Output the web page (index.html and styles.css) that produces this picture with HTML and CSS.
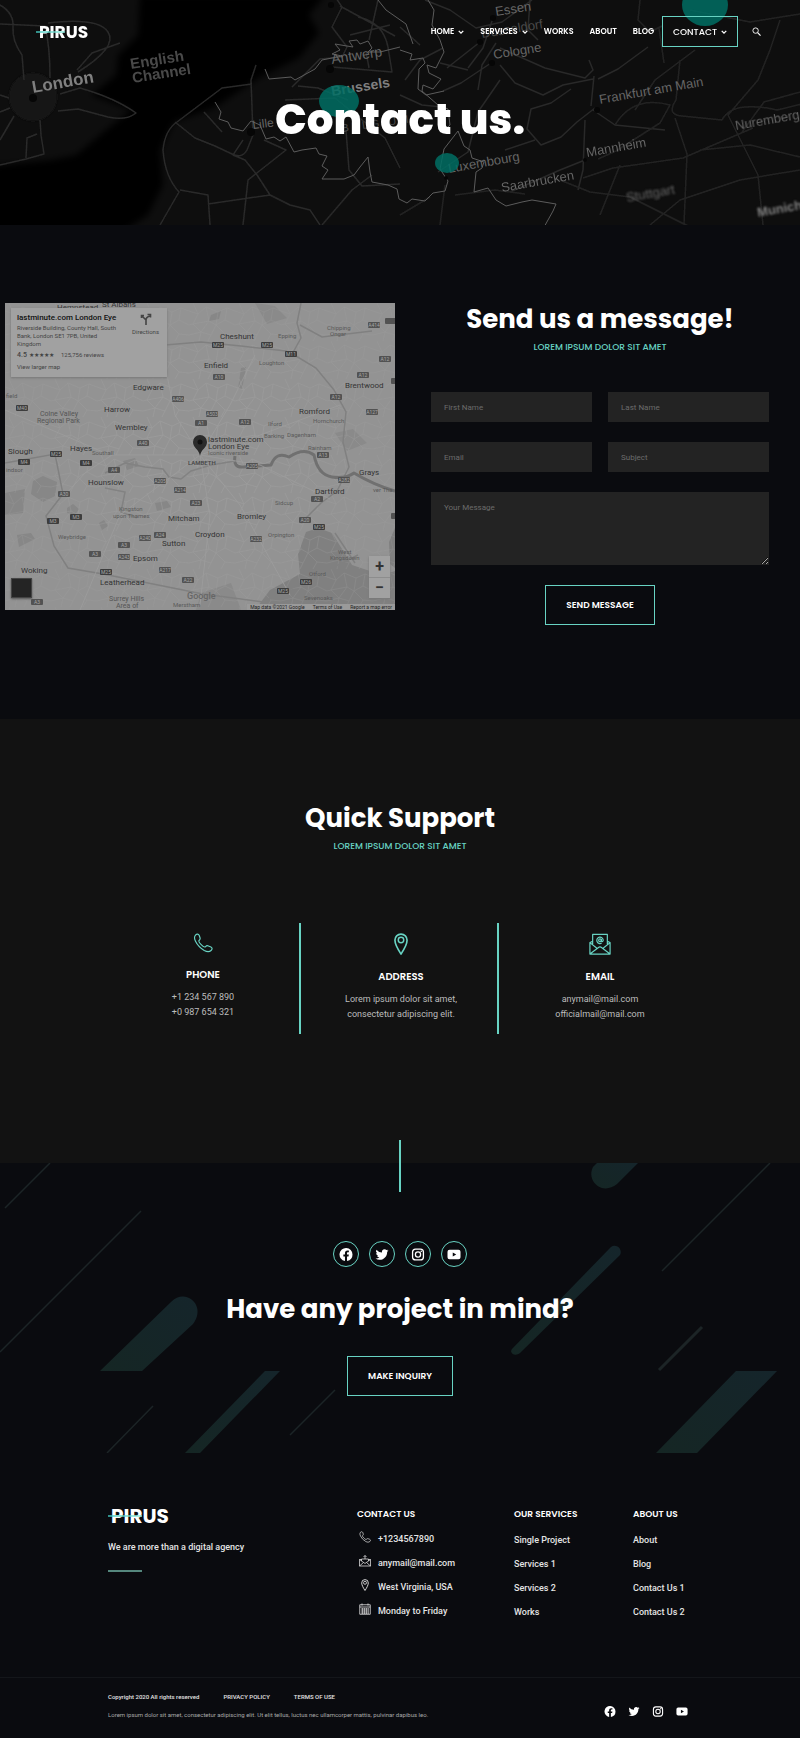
FILE: index.html
```html
<!DOCTYPE html>
<html lang="en">
<head>
<meta charset="utf-8">
<meta name="viewport" content="width=device-width, initial-scale=1">
<title>Pirus - Contact us</title>
<link rel="stylesheet" href="styles.css">
</head>
<body>
<svg class="defs" aria-hidden="true">
  <symbol id="i-chev" viewBox="1 0 8 10"><path d="M2 3.500l3 3 3-3" fill="none" stroke="currentColor" stroke-width="1.800"/></symbol>
  <symbol id="i-fb" viewBox="0 0 24 24"><path fill="currentColor" d="M24 12a12 12 0 1 0-13.9 11.9v-8.4H7.100V12h3V9.400c0-3 1.800-4.700 4.500-4.700 1.300 0 2.700.2 2.700.2v3h-1.500c-1.500 0-2 .9-2 1.900V12h3.400l-.5 3.500h-2.800v8.400A12 12 0 0 0 24 12z"/></symbol>
  <symbol id="i-tw" viewBox="0 0 24 24"><path fill="currentColor" d="M24 4.600a10 10 0 0 1-2.800.8 5 5 0 0 0 2.200-2.700c-1 .6-2 1-3.100 1.200a4.900 4.900 0 0 0-8.400 4.500A14 14 0 0 1 1.700 3.200a4.900 4.900 0 0 0 1.500 6.500 5 5 0 0 1-2.200-.6v.1a4.900 4.900 0 0 0 4 4.800 5 5 0 0 1-2.300.1 4.900 4.900 0 0 0 4.600 3.400A9.900 9.900 0 0 1 0 19.500 14 14 0 0 0 7.500 21.700c9.100 0 14-7.500 14-14v-.6A10 10 0 0 0 24 4.600z"/></symbol>
  <symbol id="i-ig" viewBox="0 0 24 24"><rect x="2" y="2" width="20" height="20" rx="5.500" fill="none" stroke="currentColor" stroke-width="2.400"/><circle cx="12" cy="12" r="4.800" fill="none" stroke="currentColor" stroke-width="2.400"/><circle cx="18" cy="6" r="1.500" fill="currentColor"/></symbol>
  <symbol id="i-yt" viewBox="0 0 28 24"><path fill="currentColor" fill-rule="evenodd" d="M5 2.500h18a4 4 0 0 1 4 4v11a4 4 0 0 1-4 4H5a4 4 0 0 1-4-4v-11a4 4 0 0 1 4-4zM11.500 8v8l7-4z"/></symbol>
  <symbol id="i-phone" viewBox="0 0 24 24"><path fill="none" stroke="currentColor" stroke-width="1.400" stroke-linejoin="round" d="M3 2.500C4.500 1 6.500 1 7.500 3l1 3c.3 1.300 0 2-1.200 3-1 1 0 2.500 2.500 5s4 3.500 5.200 2.500c1-1.200 2-1.600 3.500-1l3 1.200c2 1 1.700 3 .2 4.300-2 1.800-5 1.700-8.200 0A26 26 0 0 1 3 10C1.500 7 1.300 4.500 3 2.500z"/></symbol>
  <symbol id="i-pin" viewBox="0 0 24 24"><path fill="none" stroke="currentColor" stroke-width="1.800" stroke-linejoin="round" d="M12 1.200a6.600 6.600 0 0 0-6.600 6.800C5.400 12 9 18.500 12 23c3-4.500 6.600-11 6.600-15A6.600 6.600 0 0 0 12 1.200z"/><circle cx="12" cy="7.600" r="3" fill="none" stroke="currentColor" stroke-width="1.600"/></symbol>
  <symbol id="i-mail" viewBox="0 0 24 24"><g fill="none" stroke="currentColor" stroke-width="1.300" stroke-linejoin="round"><path d="M4 9L1 10.500V23h22V10.500L20 9M1 10.500l8 6.500M23 10.500L15 17M1 23l9-7q2-1.500 4 0l9 7M4 13V1.500h16V13"/><circle cx="12" cy="8" r="1.500"/><path d="M13.500 6.500V9q1.500 1 2-1a3.500 3.500 0 1 0-1.700 3"/></g></symbol>
  <symbol id="i-mail2" viewBox="0 0 24 24"><g fill="none" stroke="currentColor" stroke-width="1.500" stroke-linejoin="round"><path d="M1 9v13h22V9h-4M5 9H1l11 8 11-8M1 22l8-7M23 22l-8-7M5 12V8h14v4M12 8V1M9 4l3-3 3 3"/></g></symbol>
  <symbol id="i-cal" viewBox="0 0 24 24"><path fill="none" stroke="currentColor" stroke-width="1.600" d="M1.500 3.500h21v19h-21zM1.500 8h21M6 1v4M18 1v4"/><path fill="none" stroke="currentColor" stroke-width="2.600" stroke-dasharray="3 1" d="M5 12h14.500M5 16h14.500M5 20h14.500"/></symbol>
  <defs>
    <rect id="m" width="12" height="6" rx="1" fill="#3d3d3d"/>
    <rect id="a" width="12" height="6" rx="1" fill="#525252"/>
  </defs>
</svg>

<header class="hero">
  <svg class="hero-map" viewBox="0 0 800 225" preserveAspectRatio="xMidYMid slice" aria-hidden="true">
    <defs>
      <filter id="soft"><feGaussianBlur stdDeviation="0.700"/></filter>
      <filter id="softer"><feGaussianBlur stdDeviation="1.200"/></filter>
      <filter id="coast"><feGaussianBlur stdDeviation="3"/></filter>
    </defs>
    <rect width="800" height="225" fill="#0e0e0e"/>
    <path filter="url(#coast)" fill="#060606" d="M140-5l-2 40-20 20-2 20-25 20 40 15-25 20-30 25-25 5L-10 166v74h120l38-25 15-30-3-35 14-28 40-14 45-30 40-20 20-25-10-18 16-20z"/>
    <circle cx="33" cy="97" r="24" fill="#171717" filter="url(#softer)"/>
    <g fill="none" stroke="#292929" stroke-width="1.500" stroke-linejoin="round">
      <g filter="url(#soft)">
        <path d="M0 5q14 8 13 22t9 28l2 25M0 24l45 2q5 20 5 52M48 23q50-6 60 9t-30 40M77 70l15-17 28-10M60 94l20-6q35 10 56 25-10 8-28 4l-30-8-20 2M40 120l1 15 3 19-18 5-26 6M26 158l1-20 10-4M14 116L0 140M9 98L0 95M10 108l-10 4"/>
        <path d="M160 225l19-33q-14-15-16-42 2-20 14-28l45-34 30-4M180 190l28 5 2 30M208 204l62-9-13-20-12-15-12-5 10-15M243 225l5-45 38-30-22-10M175 122l20 16 20 8 17 8M232 154q10 5 15-4l6-15-2-55 5-15M270 195l20 10 20 5 10 15M322 225l30-35 20-15M346 130l3 40 13 16 38-2M204 112l18 20M298 86l20 2 30 12M292 87l28-28 22-2 5-10-15-20 10-20-10-15M332 67l60 5-4-25M388 47q-5-25-30-30M366 52l3 16M285 100l50-2 22 18 28 22 15 30M350 35l40-10M400 27l20 18M378 0l-9 40M340 6l55 30"/>
      </g>
      <path d="M425 0l25 10 26 18 26-6 30-22M493 18l-10 30-15 20M480 42l-33 26M491 63l-30 20-18 8M478 90l4-25 14-22M500 48l45 20 40 10 8-8-4-10M500 65l15 18 28 12 20-10 30-6M500 80l-22 32-10 40-30 20M443 48l-23 12-15 20M400 95l22 10 20 2M468 70l-28-7M530 0l-2 30 10 10M598 79l20-10 30-22M594 76l-3 30M595 108l-18 14-16 15-20 8-14-16 4-20 20-6 20-14M593 110l22 15 50 5M585 120l-2 50-5 20M585 160l-25 10-50 22M505 150l30-10"/>
      <path filter="url(#soft)" stroke="#222" d="M615 125q18-30 55-20l-10 18-44 28-18 8M635 110l20-30 40-30M640 0l-2 20 12 12 12-6M659 28l5 35M690 10l60 12 50-8M680 60l-4 40q-10 15 6 16l40 4q10-20 55-10l25-6M675 118l12 36-3 70M583 178l30-10 70-10 70-30M780 20l-10 30-12 30-30 35 30 60 5 50M560 180l30 12 40 5 60 30M600 215l20-50M650 225l30-25 60-20 60-10M455 195l40-5 30 4M440 225l5-40M400 215l30-18M742 132l22-30 36-10M700 150l50-5 50 12"/>
    </g>
    <path fill="none" stroke="#5c5c5c" d="M265 69l4 10 22-2 4 3 20-11 7-9 20-4-10-2 8-4-5-6 18 3-4-6 8-1 3 4 8-3 4 7-4 4h12l20-5M215 102l6 10-2 7 9 3 3 6 12 3 8-10 9 4 6 14 8-2 6 4 6-4 8 15 8-2 14-2 3 6 8 2-5 10 6 4-6 9h22l10-4 6-8 8-10 2 15 2 10 16 3 9 4 2 10 8 4 5-4 13 2 8-8 12-2 3-10-8-12 4-20 14-18 6 15 6 4 2 8 12 4-2 6-6 4-2 20 14-4 8 12 10 6 16-4 10-2 24 4-3 7-10 18M428 0l6 10-2 15 8 15 4 12-8 16-9-3 2 8 12 6-8 10-10-4-1 6 16 14 10 4 2 16-8 8M400 50l12 4-2 6 13-2 2 5-6 6-1 20 8 6 18-4M378 0l8 10 20 14 7 20"/>
    <g fill="#060606"><circle cx="330" cy="69" r="4"/><circle cx="493" cy="18" r="3"/><circle cx="480" cy="42" r="3"/><circle cx="492" cy="63" r="3"/><circle cx="597" cy="110" r="3"/><circle cx="585" cy="160" r="2"/><circle cx="251" cy="132" r="4"/><circle cx="33" cy="98" r="4"/><circle cx="446" cy="178" r="2"/><circle cx="331" cy="5" r="3"/></g>
    <g class="hero-places">
      <g filter="url(#soft)"><text class="b" font-size="17" transform="translate(33 93) rotate(-10)">London</text>
      <text class="b dim" font-size="15" transform="translate(131 69) rotate(-9)">English</text><text class="b dim" font-size="15" transform="translate(133 83) rotate(-9)">Channel</text></g>
      <text font-size="14" transform="translate(332 64) rotate(-9)">Antwerp</text>
      <text class="b" font-size="14" transform="translate(332 96) rotate(-9)">Brussels</text>
      <text font-size="12" transform="translate(253 129) rotate(-7)">Lille</text>
      <text class="dim" font-size="11" transform="translate(342 132) rotate(-8)">B E L G I U M</text>
      <text font-size="13" transform="translate(496 16) rotate(-9)">Essen</text>
      <text class="dim" font-size="13" transform="translate(482 38) rotate(-9)">Dusseldorf</text>
      <text font-size="13" transform="translate(494 59) rotate(-9)">Cologne</text>
      <text font-size="13" transform="translate(600 104) rotate(-10)">Frankfurt am Main</text>
      <text font-size="13" transform="translate(449 173) rotate(-10)">Luxembourg</text>
      <g filter="url(#soft)"><text font-size="13" transform="translate(587 157) rotate(-10)">Mannheim</text>
      <text font-size="13" transform="translate(502 192) rotate(-10)">Saarbrucken</text>
      <text font-size="13" transform="translate(736 130) rotate(-10)">Nuremberg</text></g>
      <g filter="url(#softer)"><text font-size="13" transform="translate(627 202) rotate(-10)">Stuttgart</text>
      <text class="b" font-size="13" transform="translate(758 217) rotate(-10)">Munich</text></g>
    </g>
    <g fill="#006e63" opacity="0.850"><ellipse cx="339" cy="101" rx="20" ry="16"/><ellipse cx="705" cy="5" rx="23" ry="21"/><ellipse cx="447" cy="163" rx="12" ry="10"/></g>
  </svg>
  <div class="topbar">
    <a class="logo" href="#">PIRUS</a>
    <nav class="nav">
      <a href="#">HOME<svg><use href="#i-chev"/></svg></a>
      <a href="#">SERVICES<svg><use href="#i-chev"/></svg></a>
      <a href="#">WORKS</a>
      <a href="#">ABOUT</a>
      <a href="#">BLOG</a>
      <a class="nav-box" href="#">CONTACT<svg><use href="#i-chev"/></svg></a>
      <button class="search" type="button" aria-label="Search"><svg viewBox="0 0 10 10"><circle cx="4" cy="4" r="3" fill="none" stroke="#fff"/><path d="M6.200 6.200L9.500 9.500" stroke="#fff" stroke-width="1.300"/></svg></button>
    </nav>
  </div>
  <h1>Contact us.</h1>
</header>

<main>
<section class="contact">
  <div class="map">
    <svg class="map-art" viewBox="0 0 390 307" preserveAspectRatio="xMidYMid slice" role="img" aria-label="Map of London">
      <defs>
        <pattern id="streets" width="46" height="38" patternUnits="userSpaceOnUse">
          <path fill="none" stroke="#9f9f9f" stroke-width="0.800" d="M0 8l9 3 8-7 12 5 9-4 8 3M4 0l5 11-5 10 8 8-2 9M17 4l3 14-8 11M29 9l-2 13 9 9-4 7M38 5l-2 12 10 5M0 22l4-1 16-3 7 4 9-5M0 32l12-3 10 3 5-10M22 32l-3 6M36 31l10 1"/>
        </pattern>
        <radialGradient id="fade"><stop offset="0.300" stop-color="#fff"/><stop offset="1" stop-color="#777"/></radialGradient>
        <mask id="city"><rect width="390" height="307" fill="url(#fade)"/></mask>
      </defs>
      <rect width="390" height="307" fill="#939393"/>
      <g fill="#878787"><path d="M28 178l10-5 14 6-2 14-12 6-12-8zM62 205l6-4 6 5-4 6-8-2zM94 220l5-3 4 6-6 4zM12 232l14-2 4 6-16 8zM206 12l10-4-2 8-10 2zM236 65l5-1-4 22-4 0zM0 190l20-4-2 24-18 2zM150 200l12-2 4 6-14 4zM118 158l12-3 4 8-12 4z"/></g>
      <path fill="#808080" d="M313 225l14 5 20 32 30 10 13-4v39H250l15-20 30-16-2-20 8-22zM390 225l-6 14 1 22 5 4z"/>
      <path fill="#8a8a8a" d="M196 290l30-10 10 27h-45zM250 0l20 3 12 12-20 6zM330 130l18-4 14 14-20 8z"/>
      <rect width="390" height="307" fill="url(#streets)" mask="url(#city)" opacity="0.700"/>
      <g fill="none" stroke="#808080" stroke-width="1.500">
        <path d="M296 0l-4 20 4 15-10 18M160 42l36-3 40 4 45 5 10 5 20 12 18 22 12 22-3 30 6 25-12 24-16 12-20 20M0 160l50-9 8 40-17 22 8 30 14 22 35 6 40 8 60 12 60 8 25-12 70-35M295 22l22 12 50-6M330 230l20 30"/>
      </g>
      <path fill="none" stroke="#707070" stroke-width="3" stroke-linejoin="round" d="M230 153q-2 12 8 11l28-2q5-14 18-8 15-10 25-2 4 20 18 22 14 2 22-4 20 12 41 18"/>
      <path fill="none" stroke="#828282" stroke-width="1.500" d="M100 170l20-10 20 4 18 2 6 8 12 2 10-8 20-6 24-4M100 185l20 4-4 20 16 6"/>
      <g fill="none" stroke="#9d9d9d" stroke-width="0.800"><path d="M195 152l-25-40-12-60M195 152l30-50 25-50M195 152l60 10 70 34M195 152l10 60-10 90M195 152l-80 60-40 95M195 152l-90 0-105-45M195 152l60-20 80-30M195 152l40 50 50 90M110 150l-30 20-20 22"/></g>
      <g class="shield">
        <use href="#m" x="207" y="39"/><use href="#m" x="256" y="39"/><use href="#m" x="280" y="48"/><use href="#a" x="363" y="19"/><use href="#a" x="380" y="15"/><use href="#a" x="208" y="71"/><use href="#a" x="374" y="53"/><use href="#a" x="352" y="69"/><use href="#a" x="325" y="91"/><use href="#a" x="361" y="106"/><use href="#a" x="167" y="93"/><use href="#a" x="201" y="108"/><use href="#a" x="190" y="117"/><use href="#a" x="234" y="116"/><use href="#m" x="11" y="102"/><use href="#a" x="132" y="137"/><use href="#m" x="45" y="148"/><use href="#a" x="312" y="149"/><use href="#m" x="13" y="156"/><use href="#m" x="75" y="157"/><use href="#a" x="103" y="164"/><use href="#a" x="149" y="175"/><use href="#a" x="169" y="184"/><use href="#a" x="53" y="188"/><use href="#a" x="185" y="197"/><use href="#m" x="65" y="211"/><use href="#m" x="42" y="215"/><use href="#a" x="241" y="160"/><use href="#a" x="333" y="174"/><use href="#a" x="306" y="193"/><use href="#a" x="294" y="214"/><use href="#m" x="308" y="221"/><use href="#a" x="245" y="233"/><use href="#a" x="149" y="229"/><use href="#a" x="134" y="232"/><use href="#a" x="113" y="239"/><use href="#a" x="84" y="248"/><use href="#a" x="113" y="251"/><use href="#m" x="95" y="266"/><use href="#a" x="154" y="264"/><use href="#a" x="177" y="274"/><use href="#m" x="272" y="285"/><use href="#m" x="295" y="276"/><use href="#a" x="26" y="296"/><use href="#a" x="386" y="75"/><use href="#a" x="386" y="210"/>
        <text x="213" y="44">M25</text><text x="262" y="44">M25</text><text x="286" y="53">M11</text><text x="369" y="24">A414</text><text x="214" y="76">A10</text><text x="380" y="58">A12</text><text x="358" y="74">A12</text><text x="331" y="96">A12</text><text x="367" y="111">A127</text><text x="173" y="98">A406</text><text x="207" y="113">A503</text><text x="196" y="122">A1</text><text x="240" y="121">A12</text><text x="17" y="107">M40</text><text x="138" y="142">A40</text><text x="51" y="153">M25</text><text x="318" y="154">A13</text><text x="19" y="161">M4</text><text x="81" y="162">M4</text><text x="109" y="169">A4</text><text x="155" y="180">A205</text><text x="175" y="189">A214</text><text x="59" y="193">A30</text><text x="191" y="202">A23</text><text x="71" y="216">M3</text><text x="48" y="220">M3</text><text x="247" y="165">A205</text><text x="339" y="179">A282</text><text x="312" y="198">A2</text><text x="300" y="219">A20</text><text x="314" y="226">M25</text><text x="251" y="238">A232</text><text x="155" y="234">A24</text><text x="140" y="237">A240</text><text x="119" y="244">A3</text><text x="90" y="253">A3</text><text x="119" y="256">A243</text><text x="101" y="271">M25</text><text x="160" y="269">A217</text><text x="183" y="279">A22</text><text x="278" y="290">M25</text><text x="301" y="281">M26</text><text x="32" y="301">A3</text>
      </g>
      <g class="town">
        <text x="215" y="36">Cheshunt</text><text x="199" y="65">Enfield</text><text x="340" y="85">Brentwood</text><text x="128" y="87">Edgware</text><text x="99" y="109">Harrow</text><text x="110" y="127">Wembley</text><text x="294" y="111">Romford</text><text x="3" y="151">Slough</text><text x="65" y="148">Hayes</text><text x="83" y="182">Hounslow</text><text x="354" y="172">Grays</text><text x="310" y="191">Dartford</text><text x="163" y="218">Mitcham</text><text x="232" y="216">Bromley</text><text x="190" y="234">Croydon</text><text x="157" y="243">Sutton</text><text x="128" y="258">Epsom</text><text x="16" y="270">Woking</text><text x="95" y="282">Leatherhead</text><text x="203" y="139">lastminute.com</text><text x="203" y="146">London Eye</text><text x="97" y="4">St Albans</text><text x="52" y="7">Hempstead</text>
      </g>
      <g class="town area">
        <text x="35" y="113">Colne Valley</text><text x="32" y="120">Regional Park</text><text x="104" y="298">Surrey Hills</text><text x="111" y="305">Area of</text>
      </g>
      <g class="town minor">
        <text x="273" y="35">Epping</text><text x="322" y="27">Chipping</text><text x="325" y="33">Ongar</text><text x="254" y="62">Loughton</text><text x="1" y="95">field</text><text x="308" y="120">Hornchurch</text><text x="263" y="123">Ilford</text><text x="259" y="135">Barking</text><text x="282" y="134">Dagenham</text><text x="87" y="152">Southall</text><text x="303" y="147">Rainham</text><text x="1" y="169">indsor</text><text x="270" y="202">Sidcup</text><text x="114" y="208">Kingston</text><text x="108" y="215">upon Thames</text><text x="53" y="236">Weybridge</text><text x="263" y="234">Orpington</text><text x="333" y="251">West</text><text x="325" y="257">Kingsdown</text><text x="304" y="273">Otford</text><text x="168" y="304">Merstham</text><text x="299" y="297">Sevenoaks</text><text x="368" y="189">ver Tha</text><text x="203" y="152">Iconic riverside</text><text x="183" y="162" class="strong">LAMBETH</text>
      </g>
      <text x="182" y="296" class="google">Google</text>
      <path fill="#2b2b2b" d="M195 153c-1-7-7-8-7-14a7 7 0 0 1 14 0c0 6-6 7-7 14z"/><circle cx="195" cy="139" r="2.500" fill="#111"/>
    </svg>
    <div class="place">
      <div class="place-text">
        <strong>lastminute.com London Eye</strong>
        <p>Riverside Building, County Hall, South Bank, London SE1 7PB, United Kingdom</p>
        <p class="rating"><b>4.5</b> <span class="stars">★★★★★</span> <span>125,756 reviews</span></p>
        <a href="#">View larger map</a>
      </div>
      <a class="directions" href="#"><svg viewBox="0 0 12 12"><path fill="none" stroke="#444" stroke-width="1.600" d="M6 12V7L2 3M6 7q0-3 4-4M7.500 1.500h3v3M1.500 5V2.500H4"/></svg>Directions</a>
    </div>
    <div class="zoom"><button type="button" aria-label="Zoom in">+</button><button type="button" aria-label="Zoom out">−</button></div>
    <button class="satellite" type="button" aria-label="Satellite view"></button>
    <div class="credits"><span>Map data ©2021 Google</span><a href="#">Terms of Use</a><a href="#">Report a map error</a></div>
  </div>
  <div class="message">
    <h2>Send us a message!</h2>
    <p class="sub">LOREM IPSUM DOLOR SIT AMET</p>
    <form class="form">
      <input type="text" aria-label="First Name" placeholder="First Name">
      <input type="text" aria-label="Last Name" placeholder="Last Name">
      <input type="email" aria-label="Email" placeholder="Email">
      <input type="text" aria-label="Subject" placeholder="Subject">
      <textarea aria-label="Your Message" placeholder="Your Message"></textarea>
      <button class="btn" type="submit">SEND MESSAGE</button>
    </form>
  </div>
</section>

<section class="support">
  <h2>Quick Support</h2>
  <p class="sub">LOREM IPSUM DOLOR SIT AMET</p>
  <div class="cards">
    <div class="card phone"><svg><use href="#i-phone"/></svg><h3>PHONE</h3><p>+1 234 567 890<br>+0 987 654 321</p></div>
    <div class="card"><svg><use href="#i-pin"/></svg><h3>ADDRESS</h3><p>Lorem ipsum dolor sit amet,<br>consectetur adipiscing elit.</p></div>
    <div class="card"><svg><use href="#i-mail"/></svg><h3>EMAIL</h3><p>anymail@mail.com<br>officialmail@mail.com</p></div>
  </div>
</section>

<section class="cta">
  <svg class="cta-art" viewBox="0 0 800 290" preserveAspectRatio="xMidYMid slice" aria-hidden="true">
    <defs><linearGradient id="bar" x1="0" y1="1" x2="1" y2="0"><stop offset="0" stop-color="#152624"/><stop offset="1" stop-color="#15252b"/></linearGradient></defs>
    <g stroke="#1c2426" stroke-width="1.500"><path d="M5 45L50 0M0 189L141 48M107 290L153 243M290 272L335 227M662 108L770 0"/><path stroke-width="3" d="M659 207L702 164"/></g>
    <g fill="url(#bar)">
      <path d="M100 208l71-69c15-15 36 4 22 22l-51 47z"/>
      <path d="M265 208h15l-80 82h-15z"/>
      <path d="M736 208h41l-80 82h-41z"/>
      <path d="M597 0h41l-21 21c-15 12-31-3-24-17z"/>
      <path d="M512 186L611 84c5-4 12 2 9 8L520 190c-5 4-11 0-8-4z"/>
    </g>
  </svg>
  <span class="tick"></span>
  <div class="socials">
    <a href="#" aria-label="Facebook"><svg><use href="#i-fb"/></svg></a>
    <a href="#" aria-label="Twitter"><svg><use href="#i-tw"/></svg></a>
    <a href="#" aria-label="Instagram"><svg><use href="#i-ig"/></svg></a>
    <a href="#" aria-label="YouTube"><svg><use href="#i-yt"/></svg></a>
  </div>
  <h2>Have any project in mind?</h2>
  <button class="btn" type="button">MAKE INQUIRY</button>
</section>
</main>

<footer>
  <div class="foot-main">
    <div>
      <a class="logo logo-lg" href="#">PIRUS</a>
      <p class="tagline">We are more than a digital agency</p>
      <span class="rule"></span>
    </div>
    <div>
      <h4>CONTACT US</h4>
      <ul class="contacts">
        <li><svg><use href="#i-phone"/></svg>+1234567890</li>
        <li><svg><use href="#i-mail2"/></svg>anymail@mail.com</li>
        <li><svg><use href="#i-pin"/></svg>West Virginia, USA</li>
        <li><svg><use href="#i-cal"/></svg>Monday to Friday</li>
      </ul>
    </div>
    <div>
      <h4>OUR SERVICES</h4>
      <ul class="links"><li><a href="#">Single Project</a></li><li><a href="#">Services 1</a></li><li><a href="#">Services 2</a></li><li><a href="#">Works</a></li></ul>
    </div>
    <div>
      <h4>ABOUT US</h4>
      <ul class="links"><li><a href="#">About</a></li><li><a href="#">Blog</a></li><li><a href="#">Contact Us 1</a></li><li><a href="#">Contact Us 2</a></li></ul>
    </div>
  </div>
  <div class="foot-bottom">
    <div class="legal">
      <div class="legal-row"><span>Copyright 2020 All rights reserved</span><a href="#">PRIVACY POLICY</a><a href="#">TERMS OF USE</a></div>
      <p>Lorem ipsum dolor sit amet, consectetur adipiscing elit. Ut elit tellus, luctus nec ullamcorper mattis, pulvinar dapibus leo.</p>
    </div>
    <div class="foot-social">
      <a href="#" aria-label="Facebook"><svg><use href="#i-fb"/></svg></a>
      <a href="#" aria-label="Twitter"><svg><use href="#i-tw"/></svg></a>
      <a href="#" aria-label="Instagram"><svg><use href="#i-ig"/></svg></a>
      <a href="#" aria-label="YouTube"><svg><use href="#i-yt"/></svg></a>
    </div>
  </div>
</footer>
</body>
</html>
```
FILE: styles.css
```css
:root {
  --teal: #68d3c3;
  --ink: #0a0b0f;
  --head: Poppins, Inter, sans-serif;
}
* { box-sizing: border-box; }
body { margin: 0; background: var(--ink); color: #fff; font-family: Roboto, sans-serif; font-size: 9px; }
h1, h2, h3, h4, p, ul { margin: 0; padding: 0; }
ul { list-style: none; }
a { color: inherit; text-decoration: none; }
button { font: inherit; color: inherit; background: none; border: 0; padding: 0; cursor: pointer; }
.defs { position: absolute; width: 0; height: 0; }

/* Hero */
.hero { position: relative; height: 225px; overflow: hidden; }
.hero-map { position: absolute; inset: 0; width: 100%; height: 100%; }
.hero-places { font-family: "Liberation Sans", sans-serif; fill: #666; }
.hero-places .b { font-weight: 700; fill: #808080; }
.hero-places .dim { fill: #4a4a4a; }
.topbar { position: relative; display: flex; justify-content: space-between; align-items: center; padding: 16px 39px 0 36px; }
.logo { position: relative; display: inline-block; padding-left: 3px; font: 700 17px/22px var(--head); }
.logo::after { content: ""; position: absolute; left: 0; top: 10px; width: 56%; height: 2px; background: linear-gradient(90deg, #40c8c0, #8aeadb); opacity: 0.7; }
.logo-lg { font-size: 20px; }
.nav { display: flex; align-items: center; font: 600 8px/12px var(--head); }
.nav a { display: flex; align-items: center; gap: 4px; margin-right: 16px; }
.nav svg { width: 6px; height: 8px; }
.nav .nav-box { height: 31px; margin: 0 14px 0 -8px; padding: 0 10px; border: 1px solid var(--teal); font-weight: 500; font-size: 9px; }
.search { display: flex; }
.nav .search svg { width: 9px; height: 9px; }
h1 { position: relative; padding-top: 43px; text-align: center; font: 800 42px/60px var(--head); }

/* Shared headings and buttons */
h2 { text-align: center; font: 700 26px/32px var(--head); }
.sub { margin-top: 1px; text-align: center; color: var(--teal); font: 500 9px/22px var(--head); }
.btn { height: 40px; padding: 0 20px; border: 1px solid var(--teal); font: 600 9px/12px var(--head); }

/* Map and form */
.contact { display: grid; grid-template-columns: 1fr 1fr; padding: 78px 0 94px; }
.map { position: relative; margin: 0 5px; height: 307px; overflow: hidden; background: #939393; color: #444; }
.map-art { display: block; width: 100%; height: 100%; }
.town { fill: #333; font-size: 8px; }
.area { fill: #555; font-size: 7px; }
.minor { fill: #5a5a5a; font-size: 6px; }
.strong { fill: #444; font-weight: 500; }
.shield { fill: #a5a5a5; font-size: 5px; text-anchor: middle; }
.google { fill: #666; font-size: 9px; font-weight: 500; }
.place { position: absolute; left: 6px; top: 5px; width: 156px; height: 69px; padding: 5px 8px 0 6px; display: flex; justify-content: space-between; background: #a1a1a1; box-shadow: 0 1px 2px #777; font-size: 6px; line-height: 8px; }
.place strong { display: block; color: #111; font-size: 8px; line-height: 9px; font-weight: 500; white-space: nowrap; }
.place-text { width: 105px; }
.place-text p { margin-top: 2px; }
.place-text .rating { display: flex; gap: 2px; margin: 3px 0 4px; white-space: nowrap; }
.rating b { font-size: 7px; font-weight: 500; }
.stars { margin-right: 5px; }
.directions { display: flex; flex-direction: column; align-items: center; gap: 3px; }
.directions svg { width: 12px; height: 12px; }
.zoom { position: absolute; right: 5px; bottom: 12px; width: 21px; display: grid; background: #a1a1a1; box-shadow: 0 1px 2px #777; }
.zoom button { height: 21px; font: 700 16px/20px Roboto, sans-serif; color: #333; }
.zoom button + button { border-top: 1px solid #8d8d8d; }
.satellite { position: absolute; left: 6px; bottom: 12px; width: 21px; height: 20px; background: #242424; border: 1px solid #444; box-shadow: 0 1px 2px #555; }
.credits { position: absolute; right: 0; bottom: 0; display: flex; gap: 8px; padding: 0 3px; background: #9a9a9a; color: #222; font-size: 5px; line-height: 6px; }
.message { padding: 0 31px; }
.form { display: grid; grid-template-columns: 1fr 1fr; gap: 20px 16px; margin-top: 34px; }
.form input, .form textarea { width: 100%; height: 30px; padding: 0 13px; border: 0; border-radius: 0; background: #232323; color: #ddd; font: 8px/12px Roboto, sans-serif; }
.form textarea { grid-column: 1 / -1; height: 73px; padding: 10px 13px; display: block; }
.form ::placeholder { color: #6b6b6b; opacity: 1; }
.form .btn { grid-column: 1 / -1; justify-self: center; }

/* Quick support */
.support { padding: 83px 20px 129px; background: #121212; }
.cards { display: grid; grid-template-columns: repeat(3, 1fr); max-width: 594px; margin: 66px auto 0; }
.card { height: 111px; padding: 10px 0 0 4px; text-align: center; color: #bdbdbd; line-height: 15px; }
.card:not(:last-child) { border-right: 2px solid var(--teal); }
.card svg { display: block; width: 22px; height: 22px; margin: 0 auto 14px; color: var(--teal); }
.phone svg { width: 20px; height: 20px; }
.card h3 { margin-bottom: 8px; color: #fff; font: 600 10px/15px var(--head); }

/* Call to action */
.cta { position: relative; height: 290px; display: flex; flex-direction: column; align-items: center; padding-top: 78px; }
.cta-art { position: absolute; inset: 0; width: 100%; height: 100%; }
.tick { position: absolute; left: calc(50% - 1px); top: -23px; width: 2px; height: 52px; background: var(--teal); }
.socials { position: relative; display: flex; gap: 10px; }
.socials a { display: grid; place-items: center; width: 26px; height: 26px; border: 1px solid var(--teal); border-radius: 50%; }
.socials svg { width: 14px; height: 13px; }
.cta h2 { position: relative; margin: 26px 0 31px; }
.cta .btn { position: relative; }

/* Footer */
.foot-main { display: grid; grid-template-columns: 249fr 157fr 119fr 59fr; max-width: 584px; margin: 0 auto; padding: 52px 0 0; height: 224px; line-height: 12px; font-weight: 500; color: #e4e4e4; white-space: nowrap; }
.foot-main .logo { color: #fff; }
.tagline { margin-top: 14px; }
.rule { display: block; width: 34px; height: 2px; margin-top: 17px; background: #55877d; }
h4 { margin-top: 3px; color: #fff; font: 600 9px/12px var(--head); }
.contacts { margin-top: 7px; }
.contacts li { display: flex; align-items: center; gap: 7px; height: 24px; padding-left: 2px; }
.contacts svg { width: 12px; height: 12px; margin-bottom: 5px; }
.links { margin-top: 8px; }
.links li { line-height: 24px; }
.foot-bottom { display: flex; justify-content: space-between; border-top: 1px solid #14161a; padding: 14px calc(50% - 292px) 18px; color: #a8a8a8; font-size: 6px; line-height: 10px; }
.legal-row { display: flex; gap: 24px; margin-bottom: 8px; color: #e4e4e4; font-weight: 500; }
.foot-social { display: flex; align-items: flex-end; gap: 12px; padding: 0 4px 3px 0; color: #fff; }
.foot-social svg { display: block; width: 12px; height: 11px; }
```
